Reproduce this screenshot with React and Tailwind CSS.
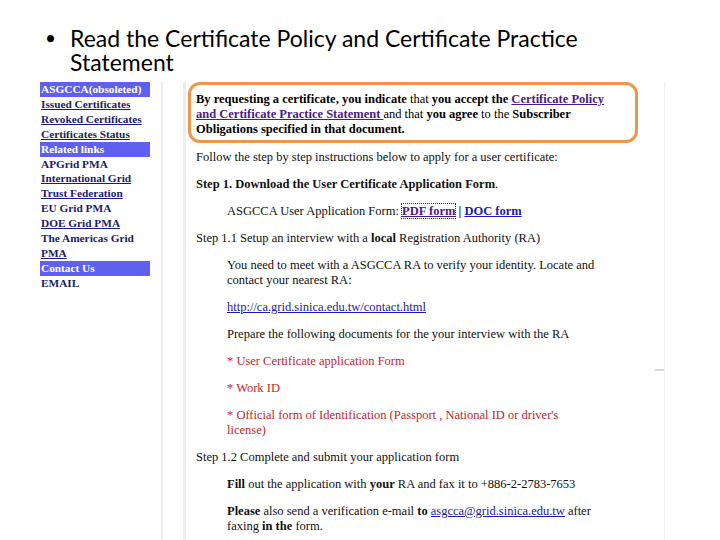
export default function App() {
  const serif = { fontFamily: '"Liberation Serif", "Times New Roman", serif' };
  const side = [
    { t: "ASGCCA(obsoleted)", h: true },
    { t: "Issued Certificates", u: true },
    { t: "Revoked Certificates", u: true },
    { t: "Certificates Status", u: true },
    { t: "Related links", h: true },
    { t: "APGrid PMA" },
    { t: "International Grid", u: true },
    { t: "Trust Federation", u: true },
    { t: "EU Grid PMA" },
    { t: "DOE Grid PMA", u: true },
    { t: "The Americas Grid" },
    { t: "PMA", u: true },
    { t: "Contact Us", h: true },
    { t: "EMAIL" },
  ];
  return (
    <div className="w-[720px] h-[540px] bg-white overflow-hidden relative">
      <div className="flex pl-[45px] pt-[26px] text-[23px] leading-[24px] text-black" style={{ fontFamily: 'Lato, "Open Sans", sans-serif' }}>
        <span className="w-[25px] shrink-0 text-[19px]">•</span>
        <div>
          Read the Certificate Policy and Certificate Practice
          <br />
          Statement
        </div>
      </div>
      <div className="flex mt-[8px]" style={serif}>
        <div className="ml-[40px] w-[110px] text-[11.3px] leading-[14.9px] font-bold text-[#1c1c6a] whitespace-nowrap">
          {side.map((s) => (
            <div
              key={s.t}
              className={
                s.h
                  ? "bg-[#5f5ff0] text-white pl-[1px]"
                  : s.u
                  ? "underline pl-[1px]"
                  : "pl-[1px]"
              }
            >
              {s.t}
            </div>
          ))}
        </div>
        <div className="ml-[11px] w-[2px] h-[470px] bg-[#ececec]" />
        <div className="ml-[20px] w-[482px] h-[470px] border-l-[3px] border-[#ededed] border-r border-r-[#f0f0f0] pl-[1px] relative">
          <div className="ml-[1px] w-[450px] h-[61px] border-[3px] border-[#ef964d] rounded-[12px] pl-[5px] pt-[7px] text-[12.5px] leading-[15px] text-black whitespace-nowrap">
            <b>By requesting a certificate, you indicate</b> that <b>you accept the</b>{" "}
            <a className="underline text-[#4b1a8a] font-bold">Certificate Policy</a>
            <br />
            <a className="underline text-[#4b1a8a] font-bold">and Certificate Practice Statement </a> and that{" "}
            <b>you agree</b> to the <b>Subscriber</b>
            <br />
            <b>Obligations specified in that document.</b>
          </div>
          <div className="pl-[9px] pt-[7px] text-[12.5px] leading-[15px] text-[#111] pr-[20px]">
            <p>Follow the step by step instructions below to apply for a user certificate:</p>
            <p className="mt-[12px] font-bold">
              Step 1. Download the User Certificate Application Form<span className="font-normal">.</span>
            </p>
            <div className="pl-[31px]">
              <p className="mt-[12px]">
                ASGCCA User Application Form:{" "}
                <a className="font-bold underline text-[#4b1a8a] outline-dotted outline-1 outline-[#4b1a8a]">PDF form</a>
                <b> | </b>
                <a className="font-bold underline text-[#1a1aa8]">DOC form</a>
              </p>
            </div>
            <p className="mt-[12px]">
              Step 1.1 Setup an interview with a <b>local</b> Registration Authority (RA)
            </p>
            <div className="pl-[31px] pr-[30px]">
              <p className="mt-[12px]">
                You need to meet with a ASGCCA RA to verify your identity. Locate and contact your nearest RA:
              </p>
              <p className="mt-[12px]">
                <a className="underline text-[#1a1aa8]">http://ca.grid.sinica.edu.tw/contact.html</a>
              </p>
              <p className="mt-[12px]">Prepare the following documents for the your interview with the RA</p>
              <p className="mt-[12px] text-[#c8232c]">* User Certificate application Form</p>
              <p className="mt-[12px] text-[#c8232c]">* Work ID</p>
              <p className="mt-[12px] text-[#c8232c]">
                * Official form of Identification (Passport , National ID or driver's
                <br />
                license)
              </p>
            </div>
            <p className="mt-[12px]">Step 1.2 Complete and submit your application form</p>
            <div className="pl-[31px] pr-[30px]">
              <p className="mt-[12px]">
                <b>Fill</b> out the application with <b>your</b> RA and fax it to +886-2-2783-7653
              </p>
              <p className="mt-[12px]">
                <b>Please</b> also send a verification e-mail <b>to</b>{" "}
                <a className="underline text-[#1a1aa8]">asgcca@grid.sinica.edu.tw</a> after faxing <b>in the</b> form.
              </p>
            </div>
          </div>
          <div className="absolute right-0 top-[287px] w-[9px] h-[2px] bg-[#d8d8d8]" />
        </div>
      </div>
    </div>
  );
}
